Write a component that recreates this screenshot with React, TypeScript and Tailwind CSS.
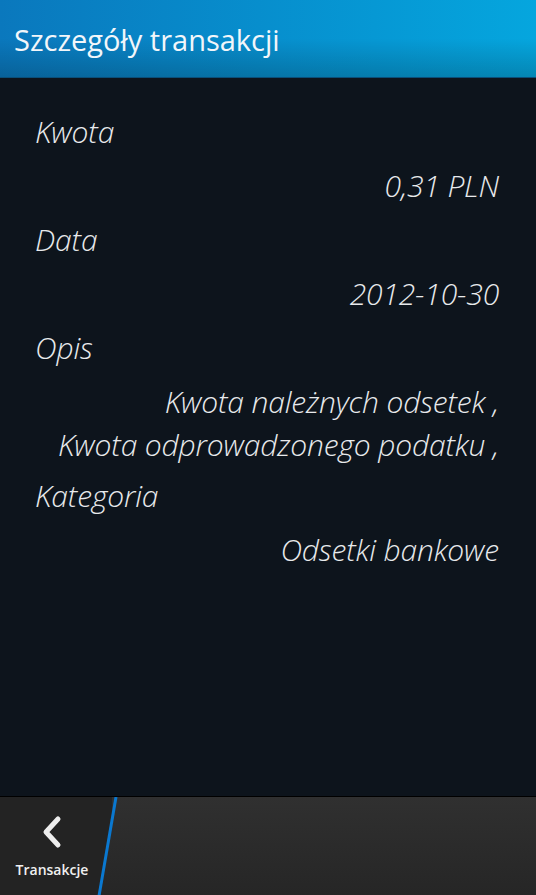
import { ReactNode } from "react"

function Label({ children }: { children: ReactNode }) {
  return <div className="h-[54px] flex items-center pl-[35px]">{children}</div>
}

function Value({ children }: { children: ReactNode }) {
  return <div className="h-[54px] flex items-center justify-end pr-[37px]">{children}</div>
}

export default function App() {
  return (
    <div
      className="w-[536px] h-[895px] flex flex-col bg-[#0d141c] text-white overflow-hidden"
      style={{ fontFamily: '"Open Sans", "Noto Sans", sans-serif' }}
    >
      {/* HEADER */}
      <header className="h-[78px] shrink-0 bg-gradient-to-r from-[#0a78bd] to-[#05a6de] border-b border-[#0a4f7a] relative">
        <div className="absolute inset-0 bg-gradient-to-b from-transparent via-transparent to-[#00000030]" />
        <h1 className="relative pl-[14px] pt-[20px] text-[29px] leading-[40px] text-[#f2f6fa]">
          Szczegóły transakcji
        </h1>
      </header>

      {/* DETAILS */}
      <main className="flex-1 pt-[26px] italic font-light text-[30px] text-[#e8eaec] tracking-[-0.15px]">
        <Label>Kwota</Label>
        <Value>0,31 PLN</Value>
        <Label>Data</Label>
        <Value>2012-10-30</Value>
        <Label>Opis</Label>
        <div className="pt-[6px] pb-[2px] pr-[37px] text-right leading-[43px]">
          <div>Kwota należnych odsetek ,</div>
          <div>Kwota odprowadzonego podatku ,</div>
        </div>
        <Label>Kategoria</Label>
        <Value>Odsetki bankowe</Value>
      </main>

      {/* ACTION BAR */}
      <footer className="h-[99px] shrink-0 bg-gradient-to-b from-[#303030] to-[#262626] border-t border-[#000] relative flex">
        <div className="w-[112px] flex flex-col items-center pt-[18px] bg-[#232323] [clip-path:polygon(0_0,116px_0,98px_100%,0_100%)]">
          <svg width="24" height="34" viewBox="0 0 24 34" className="ml-[-8px]">
            <path d="M18 4 L6 17 L18 30" fill="none" stroke="#ededed" strokeWidth="5" strokeLinecap="round" strokeLinejoin="round" />
          </svg>
          <span className="mt-[10px] ml-[-8px] text-[14px] font-semibold text-[#f0f0f0]">Transakcje</span>
        </div>
        <svg className="absolute left-0 top-0" width="140" height="99">
          <line x1="116" y1="0" x2="99" y2="99" stroke="#0a78d0" strokeWidth="3" />
        </svg>
      </footer>
    </div>
  )
}
